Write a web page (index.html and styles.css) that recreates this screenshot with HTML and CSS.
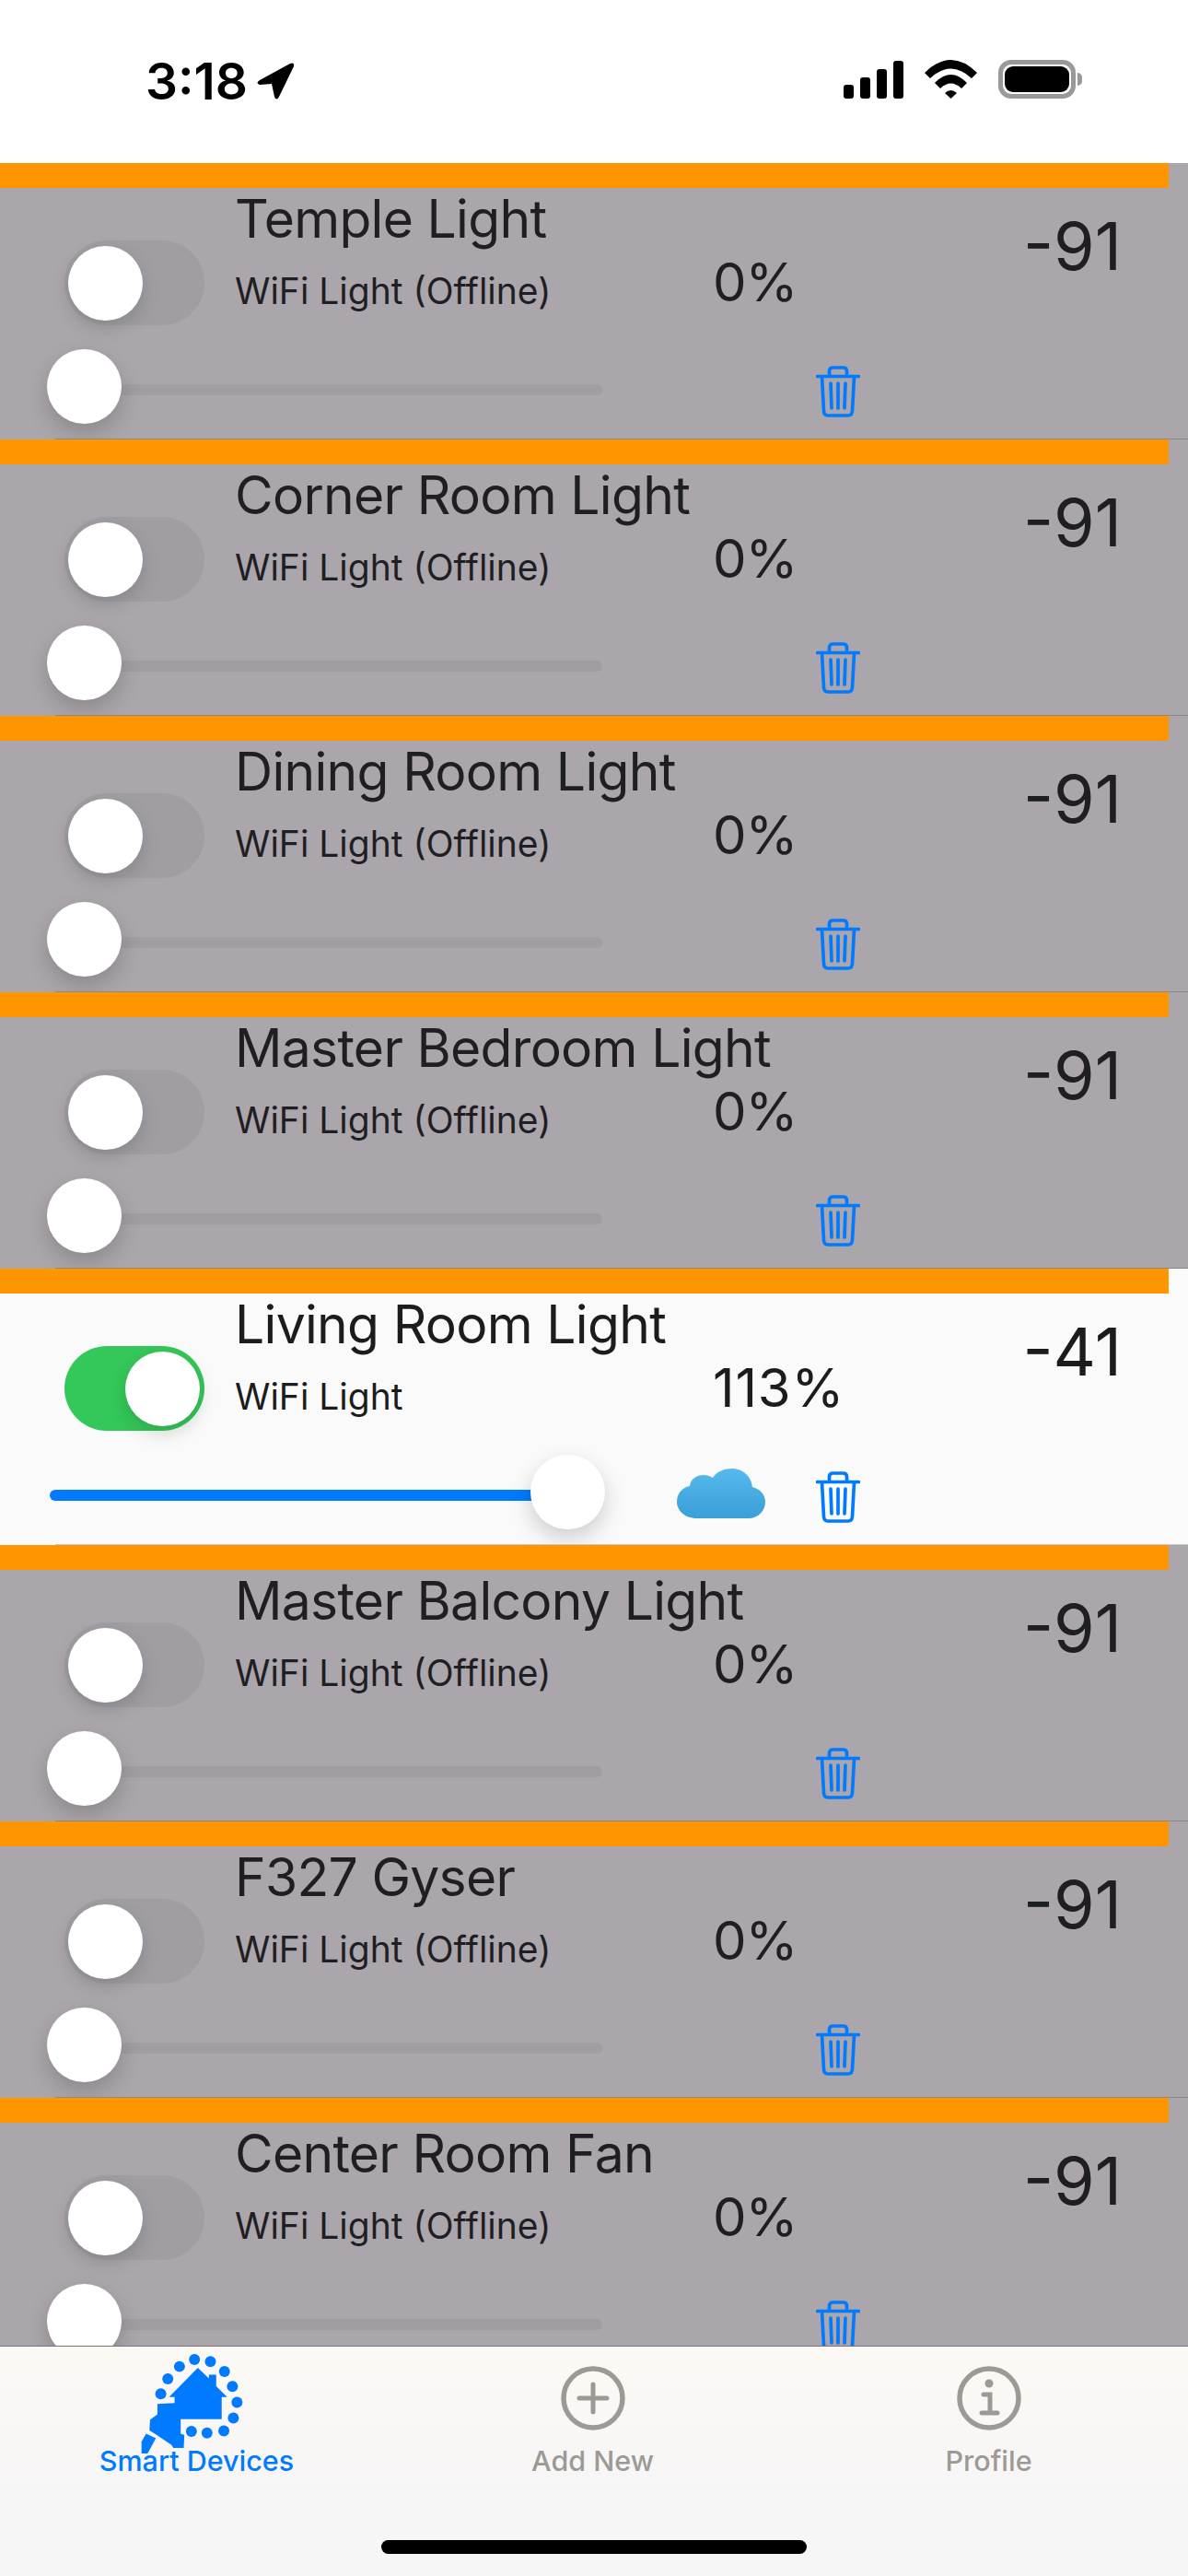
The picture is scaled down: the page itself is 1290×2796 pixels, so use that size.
FILE: index.html
```html
<!DOCTYPE html>
<html lang="en">

<head>
    <meta charset="UTF-8">
    <meta name="viewport" content="width=device-width, initial-scale=1.0">
    <title>Smart Devices</title>
    <link rel="stylesheet" href="styles.css">
</head>

<body>
    <svg class="sprite" width="0" height="0">
        <symbol id="trash" viewBox="0 0 48 56">
            <path d="M1.5 11.5H46.5M14.5 11V6Q14.5 2 18.5 2H29.5Q33.5 2 33.5 6V11M6.5 12L8.5 49Q8.8 54 13 54H35Q39.2 54 39.5 49L41.5 12M16 19L17 46M24 19V46M32 19L31 46" fill="none" stroke="#007aff" stroke-width="3.700" stroke-linecap="round" />
        </symbol>
        <linearGradient id="cloudFill" x1="0" y1="0" x2="0" y2="1">
            <stop offset="0" stop-color="#56baee" />
            <stop offset="1" stop-color="#3b9fd8" />
        </linearGradient>
    </svg>

    <div class="phone">
        <div class="status-bar">
            <span class="clock">3:18</span>
            <svg class="arrow" viewBox="0 0 41 42"><path d="M3 20L36 2Q41 0 40 5L24 38Q21 43 19 38L16 24L3 25Q-2 23 3 20Z" fill="#000" /></svg>
            <svg class="signal" viewBox="0 0 65 41">
                <rect x="0" y="26" width="11" height="15" rx="3" />
                <rect x="18" y="18" width="11" height="23" rx="3" />
                <rect x="36" y="9" width="11" height="32" rx="3" />
                <rect x="54" y="0" width="11" height="41" rx="3" />
            </svg>
            <svg class="wifi" viewBox="0 0 57 42">
                <path d="M0 14Q28.500 -14 57 14L51 20Q28.500 -1 6 20Z" />
                <path d="M11 25Q28.500 7 46 25L40 31Q28.500 20 17 31Z" />
                <path d="M22 36Q28.500 30 35 36L28.500 42Z" />
            </svg>
            <div class="battery"><div class="battery-fill"></div></div>
            <div class="battery-nub"></div>
        </div>

        <div class="device-list">

            <div class="device offline">
                <div class="device-bar"></div>
                <div class="device-top">
                    <div class="switch"><div class="knob"></div></div>
                    <div class="device-info">
                        <div class="device-name">Temple Light</div>
                        <div class="device-type">WiFi Light (Offline)</div>
                    </div>
                    <div class="device-level">0%</div>
                    <div class="device-rssi">-91</div>
                </div>
                <div class="device-bottom">
                    <div class="slider"><div class="thumb"></div></div>
                    <svg class="trash"><use href="#trash" /></svg>
                </div>
            </div>

            <div class="device offline">
                <div class="device-bar"></div>
                <div class="device-top">
                    <div class="switch"><div class="knob"></div></div>
                    <div class="device-info">
                        <div class="device-name">Corner Room Light</div>
                        <div class="device-type">WiFi Light (Offline)</div>
                    </div>
                    <div class="device-level">0%</div>
                    <div class="device-rssi">-91</div>
                </div>
                <div class="device-bottom">
                    <div class="slider"><div class="thumb"></div></div>
                    <svg class="trash"><use href="#trash" /></svg>
                </div>
            </div>

            <div class="device offline">
                <div class="device-bar"></div>
                <div class="device-top">
                    <div class="switch"><div class="knob"></div></div>
                    <div class="device-info">
                        <div class="device-name">Dining Room Light</div>
                        <div class="device-type">WiFi Light (Offline)</div>
                    </div>
                    <div class="device-level">0%</div>
                    <div class="device-rssi">-91</div>
                </div>
                <div class="device-bottom">
                    <div class="slider"><div class="thumb"></div></div>
                    <svg class="trash"><use href="#trash" /></svg>
                </div>
            </div>

            <div class="device offline">
                <div class="device-bar"></div>
                <div class="device-top">
                    <div class="switch"><div class="knob"></div></div>
                    <div class="device-info">
                        <div class="device-name">Master Bedroom Light</div>
                        <div class="device-type">WiFi Light (Offline)</div>
                    </div>
                    <div class="device-level">0%</div>
                    <div class="device-rssi">-91</div>
                </div>
                <div class="device-bottom">
                    <div class="slider"><div class="thumb"></div></div>
                    <svg class="trash"><use href="#trash" /></svg>
                </div>
            </div>

            <div class="device online">
                <div class="device-bar"></div>
                <div class="device-top">
                    <div class="switch"><div class="knob"></div></div>
                    <div class="device-info">
                        <div class="device-name">Living Room Light</div>
                        <div class="device-type">WiFi Light</div>
                    </div>
                    <div class="device-level">113%</div>
                    <div class="device-rssi">-41</div>
                </div>
                <div class="device-bottom">
                    <div class="slider"><div class="thumb"></div></div>
                    <svg class="cloud" viewBox="0 0 96 54"><path d="M22 54C8 54 0 45 0 36C0 26 7 20 14 19C15 10 23 7 29 7C33 7 36 8 39 10C43 3 52 0 60 0C72 0 81 9 82 20C90 22 96 28 96 36C96 46 88 54 78 54Z" fill="url(#cloudFill)" /></svg>
                    <svg class="trash"><use href="#trash" /></svg>
                </div>
            </div>

            <div class="device offline">
                <div class="device-bar"></div>
                <div class="device-top">
                    <div class="switch"><div class="knob"></div></div>
                    <div class="device-info">
                        <div class="device-name">Master Balcony Light</div>
                        <div class="device-type">WiFi Light (Offline)</div>
                    </div>
                    <div class="device-level">0%</div>
                    <div class="device-rssi">-91</div>
                </div>
                <div class="device-bottom">
                    <div class="slider"><div class="thumb"></div></div>
                    <svg class="trash"><use href="#trash" /></svg>
                </div>
            </div>

            <div class="device offline">
                <div class="device-bar"></div>
                <div class="device-top">
                    <div class="switch"><div class="knob"></div></div>
                    <div class="device-info">
                        <div class="device-name">F327 Gyser</div>
                        <div class="device-type">WiFi Light (Offline)</div>
                    </div>
                    <div class="device-level">0%</div>
                    <div class="device-rssi">-91</div>
                </div>
                <div class="device-bottom">
                    <div class="slider"><div class="thumb"></div></div>
                    <svg class="trash"><use href="#trash" /></svg>
                </div>
            </div>

            <div class="device offline">
                <div class="device-bar"></div>
                <div class="device-top">
                    <div class="switch"><div class="knob"></div></div>
                    <div class="device-info">
                        <div class="device-name">Center Room Fan</div>
                        <div class="device-type">WiFi Light (Offline)</div>
                    </div>
                    <div class="device-level">0%</div>
                    <div class="device-rssi">-91</div>
                </div>
                <div class="device-bottom">
                    <div class="slider"><div class="thumb"></div></div>
                    <svg class="trash"><use href="#trash" /></svg>
                </div>
            </div>

        </div>

        <div class="tab-bar">
            <div class="tab active">
                <svg class="tab-home" viewBox="150 60 350 340">
                    <path d="M344 120L380 155V143H404V180L440 216H422V288H288V335L300 340L298 382H264L258 372L210 340L186 325L188 290L212 272V238L268 235V216H250Z" fill="#007aff" />
                    <path d="M175 335L207 350L180 400H160V362Z" fill="#007aff" />
                    <g fill="#007aff">
                        <circle cx="333" cy="93" r="18" />
                        <circle cx="385" cy="100" r="18" />
                        <circle cx="431" cy="132" r="18" />
                        <circle cx="457" cy="181" r="18" />
                        <circle cx="472" cy="233" r="18" />
                        <circle cx="460" cy="284" r="18" />
                        <circle cx="429" cy="326" r="18" />
                        <circle cx="374" cy="333" r="18" />
                        <circle cx="323" cy="328" r="18" />
                        <circle cx="223" cy="205" r="18" />
                        <circle cx="246" cy="156" r="18" />
                        <circle cx="284" cy="116" r="18" />
                    </g>
                </svg>
                <span class="tab-label">Smart Devices</span>
            </div>
            <div class="tab">
                <svg class="tab-icon" viewBox="0 0 70 70">
                    <circle cx="35" cy="35" r="32" fill="none" stroke="#9c9a95" stroke-width="5.500" />
                    <path d="M35 20V50M20 35H50" fill="none" stroke="#9c9a95" stroke-width="5" stroke-linecap="round" />
                </svg>
                <span class="tab-label">Add New</span>
            </div>
            <div class="tab">
                <svg class="tab-icon" viewBox="0 0 70 70">
                    <circle cx="35" cy="35" r="32" fill="none" stroke="#9c9a95" stroke-width="5.500" />
                    <circle cx="35" cy="19" r="4.500" fill="#9c9a95" />
                    <path d="M29 31H36V50M27 51H44" fill="none" stroke="#9c9a95" stroke-width="5" stroke-linecap="round" />
                </svg>
                <span class="tab-label">Profile</span>
            </div>
            <div class="home-indicator"></div>
        </div>
    </div>
</body>

</html>
```

FILE: styles.css
```css
body {
    font-family: "Inter", "Liberation Sans", sans-serif;
    background-color: #fff;
    margin: 0;
}

.sprite {
    display: block;
    height: 0;
}

.phone {
    width: 1290px;
    height: 2796px;
    display: flex;
    flex-direction: column;
    overflow: hidden;
}

/* status bar */

.status-bar {
    height: 177px;
    flex: none;
    display: flex;
    align-items: flex-start;
    padding-left: 158px;
    box-sizing: border-box;
}

.clock {
    font-size: 55px;
    font-weight: 600;
    line-height: 64px;
    margin-top: 56px;
    letter-spacing: 0;
    width: 121px;
}

.arrow {
    width: 41px;
    height: 42px;
    margin-top: 67px;
}

.signal {
    width: 65px;
    height: 41px;
    margin-top: 66px;
    margin-left: 596px;
}

.wifi {
    width: 57px;
    height: 42px;
    margin-top: 65px;
    margin-left: 23px;
}

.battery {
    width: 84px;
    height: 42px;
    margin-top: 65px;
    margin-left: 23px;
    border: 5px solid #999;
    border-radius: 14px;
    box-sizing: border-box;
    padding: 2px;
}

.battery-fill {
    height: 100%;
    background-color: #000;
    border-radius: 9px;
}

.battery-nub {
    width: 5px;
    height: 14px;
    margin-top: 79px;
    margin-left: 2px;
    background-color: #999;
    border-radius: 0 5px 5px 0;
}

/* device rows */

.device-list {
    flex: 1;
    min-height: 0;
    overflow: hidden;
}

.device {
    height: 300px;
    box-sizing: border-box;
    position: relative;
}

.device.offline {
    background-color: #aaa6ab;
    color: #1f1f23;
}

.device.online {
    background-color: #fafafa;
    color: #1c1c1e;
}

.device::after {
    content: "";
    position: absolute;
    left: 60px;
    right: 0;
    bottom: 0;
    height: 1px;
    background-color: #8a878c;
}

.device.online::after {
    background-color: #c6c6c8;
}

.device-bar {
    width: 1269px;
    height: 27px;
    background-color: #ff9500;
}

.device-top {
    height: 175px;
    display: flex;
    align-items: flex-start;
    padding-left: 70px;
}

.switch {
    width: 152px;
    height: 92px;
    flex: none;
    margin-top: 57px;
    border-radius: 46px;
    background-color: #a09ea3;
    box-sizing: border-box;
    padding: 6px 5px;
}

.knob {
    width: 81px;
    height: 81px;
    border-radius: 50%;
    background-color: #fff;
    margin-left: -1px;
    box-shadow: 0 8px 20px rgba(0, 0, 0, 0.15);
}

.online .switch {
    background-color: #34c759;
}

.online .knob {
    margin-left: 61px;
}

.device-info {
    width: 519px;
    flex: none;
    margin-left: 33px;
}

.device-name {
    font-size: 57px;
    line-height: 68px;
    margin-top: 0;
    white-space: nowrap;
    letter-spacing: -0.7px;
}

.device-type {
    font-size: 39px;
    line-height: 46px;
    margin-top: 21px;
    white-space: nowrap;
}

.device-level {
    font-size: 58px;
    line-height: 70px;
    margin-top: 67px;
    letter-spacing: -1px;
}

.online .device-level {
    letter-spacing: 0.8px;
}

.device-rssi {
    font-size: 72px;
    line-height: 84px;
    margin-top: 21px;
    margin-left: auto;
    margin-right: 72px;
}

.device-bottom {
    display: flex;
    align-items: flex-start;
    padding-left: 54px;
}

.slider {
    width: 600px;
    height: 12px;
    flex: none;
    margin-top: 38px;
    border-radius: 6px;
    background-color: #a09ea3;
    position: relative;
}

.online .slider {
    background-color: #007aff;
}

.thumb {
    position: absolute;
    left: -3px;
    top: -38px;
    width: 81px;
    height: 81px;
    border-radius: 50%;
    background-color: #fff;
    box-shadow: 0 10px 24px rgba(0, 0, 0, 0.18);
}

.online .thumb {
    left: 522px;
}

.cloud {
    width: 96px;
    height: 54px;
    margin-top: 15px;
    margin-left: 81px;
}

.trash {
    width: 48px;
    height: 56px;
    margin-top: 18px;
    margin-left: 232px;
}

.cloud + .trash {
    margin-left: 55px;
}

/* tab bar */

.tab-bar {
    height: 250px;
    flex: none;
    box-sizing: border-box;
    border-top: 1px solid #77757a;
    background: linear-gradient(180deg, #fcf9f5, #f7f6f6 60%);
    display: grid;
    grid-template-columns: 430px 430px 430px;
    position: relative;
}

.tab {
    display: flex;
    flex-direction: column;
    align-items: center;
    padding-top: 21px;
    color: #9c9a95;
}

.tab.active {
    color: #007aff;
}

.tab-icon {
    width: 70px;
    height: 70px;
    margin-right: 2px;
}

.tab-home {
    width: 117px;
    height: 113px;
    margin-top: -18px;
    margin-bottom: -25px;
    margin-right: 14px;
}

.tab-label {
    font-size: 30.500px;
    font-weight: 500;
    line-height: 36px;
    margin-top: 15px;
    margin-right: 3px;
}

.home-indicator {
    position: absolute;
    left: 414px;
    top: 210px;
    width: 462px;
    height: 15px;
    background-color: #000;
    border-radius: 8px;
}
```
